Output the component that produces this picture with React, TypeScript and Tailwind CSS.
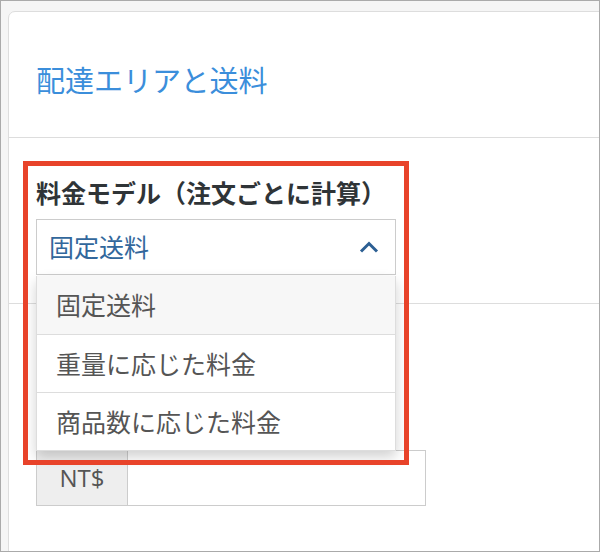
import React from "react";

const options = ["固定送料", "重量に応じた料金", "商品数に応じた料金"];

const App: React.FC = () => {
  return (
    <div
      className="relative w-[600px] h-[552px] overflow-hidden border border-[#aaaaaa] bg-[#f5f5f5] pl-[7px] pt-[10px]"
      style={{ fontFamily: '"Noto Sans CJK JP", "Noto Sans", sans-serif' }}
    >
      {/* card */}
      <div className="w-[620px] h-[600px] bg-white border border-[#dddddd] rounded-tl-[7px]">
        <div className="h-[126px] border-b border-[#dddddd] pl-[27px] pt-[50px]">
          <h2 className="text-[29px] leading-[35px] text-[#3b8edb]">配達エリアと送料</h2>
        </div>

        <div className="h-[166px] border-b border-[#dddddd] pl-[27px] pt-[38px]">
          <label className="block text-[25px] leading-[33px] font-bold text-[#2f3437]">
            料金モデル（注文ごとに計算）
          </label>
          <div className="mt-[10px] w-[360px] h-[56px] border border-[#cccccc] flex items-center justify-between pl-[12px] pr-[16px]">
            <span className="text-[25px] text-[#32679c]">固定送料</span>
            <svg width="20" height="12" viewBox="0 0 20 12" fill="none">
              <path d="M2 10.5 L10 2.5 L18 10.5" stroke="#2c5f93" strokeWidth="3" />
            </svg>
          </div>
        </div>

        <div className="pl-[27px] pt-[146px]">
          <div className="flex w-[390px] h-[56px] border border-[#cccccc]">
            <div
              className="w-[91px] bg-[#eeeeee] border-r border-[#cccccc] flex items-center justify-center text-[24px] text-[#555555]"
              style={{ fontFamily: '"Open Sans", "Noto Sans CJK JP", sans-serif' }}
            >
              NT$
            </div>
            <div className="flex-1 bg-white" />
          </div>
        </div>
      </div>

      {/* open dropdown menu */}
      <ul className="absolute left-[35px] top-[275px] w-[360px] bg-white border border-[#dddddd] border-t-0 shadow-[0_6px_12px_rgba(0,0,0,0.18)]">
        {options.map((o, i) => (
          <li
            key={o}
            className={`h-[58px] flex items-center pl-[19px] text-[25px] text-[#555555] ${
              i === 0 ? "bg-[#f7f7f7]" : "border-t border-[#dddddd]"
            }`}
          >
            {o}
          </li>
        ))}
      </ul>

      {/* annotation */}
      <div className="absolute left-[22px] top-[160px] w-[386px] h-[304px] border-[5px] border-[#e8432a]" />
    </div>
  );
};

export default App;
